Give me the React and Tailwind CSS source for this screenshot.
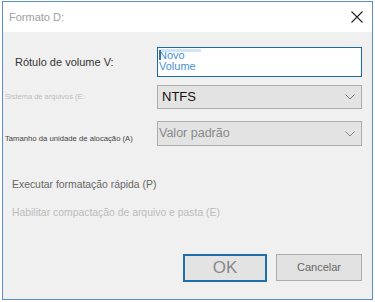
import React from "react";

const Chevron = ({ color = "#777" }) => (
  <svg width="10" height="6" viewBox="0 0 10 6" fill="none">
    <path d="M0.5 0.5 L5 5 L9.5 0.5" stroke={color} strokeWidth="1" />
  </svg>
);

const App = () => {
  return (
    <div
      className="w-[375px] h-[302px] bg-white pt-[1px] pl-[2px] pr-[2px] pb-[2px]"
      style={{ fontFamily: '"Liberation Sans", Arial, sans-serif' }}
    >
      <div className="h-[299px] border border-[#5b8fc4] flex flex-col">
        {/* title bar */}
        <div className="h-[30px] bg-white flex items-center justify-between pl-[6px] pr-[9px] shrink-0">
          <span className="text-[11px] text-[#a0a0a0]">Formato D:</span>
          <svg width="12" height="12" viewBox="0 0 12 12">
            <path d="M0.5 0.5 L11.5 11.5 M11.5 0.5 L0.5 11.5" stroke="#222" strokeWidth="1.1" />
          </svg>
        </div>

        {/* body */}
        <div className="flex-1 bg-[#f0f0f0] flex flex-col">
          {/* volume label */}
          <div className="mt-[15px] h-[30px] flex">
            <div className="w-[154px] pl-[12px] flex items-center text-[11px] text-[#333]">
              Rótulo de volume V:
            </div>
            <div className="relative w-[205px] h-[30px] bg-white border border-[#1d6b9e]">
              <div className="absolute left-[1px] top-[1px] w-[42px] h-[3px] bg-[#cfe4f7]" />
              <div className="absolute left-[1px] top-[2px] w-[2px] h-[10px] bg-[#3a6fa8]" />
              <div className="pl-[1px] pt-[2px] text-[11px] leading-[11px] text-[#4a92d4]">
                Novo
                <br />
                Volume
              </div>
            </div>
          </div>

          {/* file system */}
          <div className="mt-[8px] h-[24px] flex">
            <div className="w-[154px] pl-[2px] flex items-center text-[7.5px] text-[#bdbdbd]">
              Sistema de arquivos (E:
            </div>
            <div className="w-[205px] h-[24px] bg-[#e3e3e3] border border-[#adadad] flex items-center justify-between pl-[4px] pr-[6px]">
              <span className="text-[13px] text-[#111]">NTFS</span>
              <Chevron />
            </div>
          </div>

          {/* allocation */}
          <div className="mt-[12px] h-[25px] flex">
            <div className="w-[154px] pl-[2px] flex items-end pb-[1px] text-[7.7px] text-[#444]">
              Tamanho da unidade de alocação (A)
            </div>
            <div className="w-[205px] h-[25px] bg-[#e3e3e3] border border-[#adadad] flex items-center justify-between pl-[1px] pr-[6px]">
              <span className="text-[12.5px] text-[#888]">Valor padrão</span>
              <Chevron color="#888" />
            </div>
          </div>

          {/* options */}
          <div className="mt-[32px] h-[14px] pl-[9px] flex items-center text-[10.4px] text-[#666]">
            Executar formatação rápida (P)
          </div>
          <div className="mt-[14px] h-[14px] pl-[9px] flex items-center text-[10.4px] text-[#bcbcbc]">
            Habilitar compactação de arquivo e pasta (E)
          </div>

          {/* buttons */}
          <div className="mt-[34px] h-[28px] flex justify-end gap-[9px] pr-[10px]">
            <button className="w-[84px] h-[28px] bg-[#e3e3e3] border-2 border-[#1e6fa8] text-[17px] text-[#888] flex items-center justify-center">
              OK
            </button>
            <button className="w-[86px] h-[27px] bg-[#e1e1e1] border border-[#adadad] text-[11px] text-[#666] flex items-center justify-center">
              Cancelar
            </button>
          </div>
        </div>
      </div>
    </div>
  );
};

export default App;
